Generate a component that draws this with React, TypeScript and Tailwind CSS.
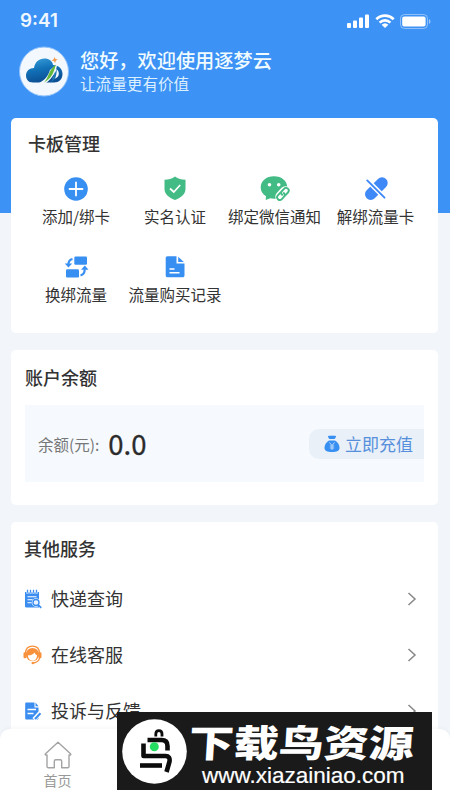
import React from "react";

function Signal() {
  return (
    <svg width="23" height="14" viewBox="0 0 23 14" fill="#fff">
      <rect x="0" y="9" width="4" height="5" rx="1" />
      <rect x="6" y="6.5" width="4" height="7.5" rx="1" />
      <rect x="12" y="3.5" width="4" height="10.5" rx="1" />
      <rect x="18" y="0.5" width="4" height="13.5" rx="1" />
    </svg>
  );
}

function Wifi() {
  return (
    <svg width="20" height="14" viewBox="0 0 20 14" fill="none" stroke="#fff" strokeWidth="2.7">
      <path d="M1.3 5.2a12.6 12.6 0 0 1 17.4 0" />
      <path d="M4.6 8.6a7.8 7.8 0 0 1 10.8 0" />
      <path d="M10 14 6.6 10.8a5 5 0 0 1 6.8 0Z" fill="#fff" stroke="none" />
    </svg>
  );
}

function Battery() {
  return (
    <svg width="31" height="15" viewBox="0 0 31 15">
      <rect x="0.5" y="0.5" width="27" height="14" rx="4" fill="none" stroke="#fff" strokeOpacity=".42" />
      <rect x="2.2" y="2.4" width="23.4" height="10" rx="2" fill="#fff" />
      <path d="M29 5v5c2-1 2-4 0-5Z" fill="#fff" fillOpacity=".5" />
    </svg>
  );
}

function Logo() {
  return (
    <svg width="50" height="51" viewBox="0 0 50 51">
      <defs>
        <linearGradient id="cloud" x1="0" y1="0" x2="0.3" y2="1">
          <stop offset="0" stopColor="#3aa0dc" />
          <stop offset=".5" stopColor="#1272b8" />
          <stop offset="1" stopColor="#0b4f94" />
        </linearGradient>
      </defs>
      <circle cx="25" cy="25.5" r="24.5" fill="#f3f8fe" stroke="#8bbffa" />
      <path
        d="M14 36.5C9 36.5 7 33 7 29.500C7 25 10.500 22 15 22C16 16 20 12.500 25.500 12.500C30 12.500 33.500 15 34 19C39 18.800 43.500 22.500 43.500 28C43.500 33 40 36.500 35 36.500Z"
        fill="url(#cloud)"
      />
      <path d="M35 22.500c4.500 1 5.500 4 4.500 7-1 2.500-3.500 3.500-6 3 2.500-2.500 3-5.500 1.500-10Z" fill="#f3f8fe" />
      <path d="M20 37c6-3 9-7 11-13l7-6c0 6-4 14-11 19Z" fill="#f3f8fe" />
      <path d="M25 36.500c5-5 4-12 12-18-2 6-3 13-12 18Z" fill="#63b83c" />
      <path d="M31 36.500c4-3 3-8 7-13-1 5 0 10-7 13Z" fill="#1874b5" />
      <path d="m35.500 11 1 2.100 2.300.5-2 1.200-.6 2.300-1.300-2-2.300-.4 2-1.400Z" fill="#f39a4b" />
    </svg>
  );
}

function AddIcon() {
  return (
    <svg width="26" height="26" viewBox="0 0 26 26">
      <circle cx="13" cy="13" r="11.800" fill="#388ff2" />
      <path d="M13 6.500v13M6.500 13h13" stroke="#fff" strokeWidth="1.800" strokeLinecap="round" />
    </svg>
  );
}

function ShieldIcon() {
  return (
    <svg width="26" height="26" viewBox="0 0 26 26">
      <path d="M13 0.500c3 2.200 6.500 3.300 10.500 3.300v9c0 5-3.500 8.500-10.500 11.200C6 21.300 2.500 17.800 2.500 12.800v-9C6.500 3.800 10 2.700 13 .500Z" fill="#43bb84" />
      <path d="m8 12.500 3.800 3.500 6.400-7" fill="none" stroke="#fff" strokeWidth="1.700" />
    </svg>
  );
}

function WechatIcon() {
  return (
    <svg width="30" height="26" viewBox="0 0 30 26">
      <path d="M14 .300c7.700 0 13.300 4.700 13.300 11.200 0 6.800-5.600 11.300-13.300 11.300-1.500 0-2.500-.2-3.700-.500L5.700 24l.3-3.700C2.700 18.200.700 15.200.700 11.500.700 5 6.300.300 14 .300Z" fill="#43bb84" />
      <circle cx="9.500" cy="8.800" r="1.800" fill="#fff" />
      <circle cx="18.700" cy="8.800" r="1.800" fill="#fff" />
      <g transform="rotate(-47 23 18)">
        <rect x="14.200" y="12.700" width="17.600" height="10.600" rx="5.300" fill="#fff" />
        <g fill="none" stroke="#43bb84" strokeWidth="1.900" strokeLinecap="round">
          <path d="M22.500 15.200h-4a2.700 2.700 0 0 0 0 5.400h3a2.700 2.700 0 0 0 2.700-2.700" />
          <path d="M23.500 20.600h4a2.700 2.700 0 0 0 0-5.400h-3a2.700 2.700 0 0 0-2.700 2.700" />
        </g>
      </g>
    </svg>
  );
}

function UnlinkIcon() {
  return (
    <svg width="26" height="26" viewBox="0 0 26 26">
      <path d="M19 7 7.700 18.300" stroke="#3f88f7" strokeWidth="11.400" strokeLinecap="round" />
      <path d="m3 3 20 20" stroke="#fff" strokeWidth="4.800" />
      <path d="m4.200 4.400 17.300 17.300" stroke="#3f88f7" strokeWidth="1.900" strokeLinecap="round" />
    </svg>
  );
}

function SwapIcon() {
  return (
    <svg width="26" height="26" viewBox="0 0 26 26" fill="#388ff2">
      <rect x="11.300" y="2.500" width="12.700" height="8.300" rx="1.300" />
      <rect x="3" y="15.200" width="13" height="8.300" rx="1.300" />
      <g fill="none" stroke="#388ff2" strokeWidth="2.200">
        <path d="M9.500 5C6.500 5.700 5.400 7.500 5.400 10.500" />
        <path d="M17.500 21.300c3-.5 4.200-2.500 4.200-6" />
      </g>
      <path d="M1.800 9.500h7.400l-3.800 4Z" />
      <path d="M18 15.800h7.500l-3.700-4.300Z" />
    </svg>
  );
}

function DocIcon() {
  return (
    <svg width="26" height="26" viewBox="0 0 26 26">
      <path d="M5.500 2.300h9v7.200h8v12c0 1-.8 1.800-1.800 1.800H5.500c-1 0-1.800-.8-1.800-1.800V4.100c0-1 .8-1.800 1.800-1.800Z" fill="#388ff2" />
      <path d="M16.200 2.800 21.800 8h-5.600Z" fill="#388ff2" />
      <path d="M7.500 15h5M7.500 18.800h10" stroke="#fff" strokeWidth="1.500" />
    </svg>
  );
}

function MoneyBag() {
  return (
    <svg width="16" height="18" viewBox="0 0 16 18">
      <path d="M4 1.200C5.500.200 6.500 1.300 8 .500c1.500.8 3-.3 4 .700 0 1.200-.8 2-1.500 2.800h-5C4.800 3.200 4 2.400 4 1.200Z" fill="#388ff2" />
      <path d="M5 5.500h6c3 2 4.500 4.500 4.500 7.300 0 3-2.500 4.300-7.500 4.300S.500 15.800.500 12.800C.500 10 2 7.500 5 5.500Z" fill="#388ff2" />
      <path d="m5.500 7.500 2.500 3 2.500-3M8 10.500V15M5.800 11h4.400M5.800 13h4.400" fill="none" stroke="#bcd8fa" strokeWidth="1" />
    </svg>
  );
}

function QueryIcon() {
  return (
    <svg width="18" height="20" viewBox="0 0 18 20">
      <path d="M1 3h14v15.500H2.200c-.7 0-1.200-.5-1.200-1.200Z" fill="#3b8df0" />
      <path d="M3.500 1v3.500M6.500 1v3.500M9.500 1v3.500M12.500 1v3.500" stroke="#fff" strokeWidth="2.200" />
      <path d="M3.500 .8v3M6.500 .8v3M9.500 .8v3M12.500 .8v3" stroke="#3b8df0" strokeWidth="1.300" />
      <path d="M3.500 7.800h9M3.500 10.800h5M3.500 13.800h4" stroke="#fff" strokeWidth="1.100" />
      <circle cx="12" cy="13.500" r="4.300" fill="#fff" />
      <circle cx="12" cy="13.500" r="3" fill="#eaf3ff" stroke="#3b8df0" strokeWidth="1.400" />
      <path d="m14.200 15.800 3 3" stroke="#3b8df0" strokeWidth="1.700" />
    </svg>
  );
}

function ServiceIcon() {
  return (
    <svg className="-ml-px" width="19" height="20" viewBox="0 0 19 20">
      <path d="M2.500 8C2.800 3.800 5.500 1.200 9.500 1.200S16.200 3.800 16.500 8" fill="none" stroke="#f7913b" strokeWidth="1.300" />
      <circle cx="9.500" cy="9.500" r="6.600" fill="#f7913b" />
      <path d="M5 10.300c3 .2 5-.8 6.500-2.800.7 1.500 1.400 2.300 2.500 2.700 0 3.400-1.800 5.500-4.500 5.500S5 13.500 5 10.300Z" fill="#fff" />
      <rect x=".5" y="7.200" width="3" height="6" rx="1.300" fill="#f7913b" />
      <rect x="15.500" y="7.200" width="3" height="6" rx="1.300" fill="#f7913b" />
      <path d="M16.700 12.500c-.5 3.300-3 5-6 5.500" fill="none" stroke="#f7913b" strokeWidth="1.300" />
      <circle cx="9.800" cy="18" r="1.300" fill="#f7913b" />
    </svg>
  );
}

function FeedbackIcon() {
  return (
    <svg width="18" height="20" viewBox="0 0 18 20">
      <path d="M2.500 1.500h8v5h4v10.700c0 .8-.5 1.300-1.300 1.300H2.500c-.8 0-1.300-.5-1.300-1.300V2.800c0-.8.500-1.300 1.300-1.300Z" fill="#3b8df0" />
      <path d="m11.500 1.500 3 3.800h-3Z" fill="#3b8df0" />
      <path d="M3.500 8.500h8.500M3.500 12.500h6" stroke="#fff" strokeWidth="1.500" />
      <path d="m10 18.500 6-6.500" stroke="#fff" strokeWidth="4.200" />
      <path d="m11 18 5.500-5.800" stroke="#3b8df0" strokeWidth="2" />
    </svg>
  );
}

function HomeIcon() {
  return (
    <svg width="28" height="28" viewBox="0 0 28 28" fill="none" stroke="#a3a3a3" strokeWidth="1.400" strokeLinejoin="round">
      <path d="M14 1.200 1.500 12.800c-.5.500-.3 1.200.3 1.200H3v11.500c0 .8.500 1.300 1.300 1.300h6v-6.500c0-1 .6-1.600 1.500-1.600h4.400c.9 0 1.500.6 1.500 1.600v6.500h6c.8 0 1.300-.5 1.300-1.300V14h1.200c.6 0 .8-.7.3-1.200Z" />
    </svg>
  );
}

function BirdLogo() {
  return (
    <svg className="shrink-0" width="66" height="66" viewBox="0 0 66 66">
      <circle cx="33.500" cy="33.500" r="32.300" fill="#fff" />
      <g fill="none" stroke="#0c0c0c" strokeWidth="4.600" strokeLinejoin="round">
        <path d="M34.800 18.500v-2.500c0-4.500 6.200-4.500 6.200 0v2.500" strokeWidth="2.800" />
        <path d="M26.500 22h14c4 0 6 2 6 6v4.500" />
        <path d="M22.500 25.500V38h22c3.500 0 4.500 2 4 5.500L45.500 54" />
        <path d="M19 47.500h22" />
      </g>
      <circle cx="33.300" cy="28.700" r="4.500" fill="#24dc61" />
    </svg>
  );
}

const tiles = [
  { label: "添加/绑卡", icon: <AddIcon /> },
  { label: "实名认证", icon: <ShieldIcon /> },
  { label: "绑定微信通知", icon: <WechatIcon /> },
  { label: "解绑流量卡", icon: <UnlinkIcon /> },
  { label: "换绑流量", icon: <SwapIcon /> },
  { label: "流量购买记录", icon: <DocIcon /> },
];

const services = [
  { label: "快递查询", icon: <QueryIcon /> },
  { label: "在线客服", icon: <ServiceIcon /> },
  { label: "投诉与反馈", icon: <FeedbackIcon /> },
];

export default function App() {
  return (
    <div className="relative h-[800px] w-[450px] overflow-hidden bg-[#f2f6fa] font-['Noto_Sans_CJK_SC',sans-serif] text-[#333]">
      <header className="h-[213px] bg-[#3c92f5]">
        <div className="flex h-[42px] items-center justify-between pl-5 pr-[19px]">
          <span className="font-['Inter',sans-serif] text-[18.800px] font-semibold leading-none text-[#eef7ff]">9:41</span>
          <div className="flex items-center gap-[5px]">
            <Signal />
            <Wifi />
            <Battery />
          </div>
        </div>
        <div className="flex items-start gap-[11px] pl-[19px] pt-1">
          <Logo />
          <div>
            <h1 className="text-[19.200px] font-medium leading-7 text-[#f0fbff]">您好，欢迎使用逐梦云</h1>
            <p className="-mt-px text-[15.600px] leading-5 text-[#dcf0ff]">让流量更有价值</p>
          </div>
        </div>
      </header>

      <main className="-mt-[95px] ml-[11px] w-[427px]">
        <section className="h-[215px] rounded-[5px] bg-white pt-[11px]">
          <h2 className="pl-[17px] text-[18px] font-medium leading-7">卡板管理</h2>
          <div className="ml-[15px] mt-[18px] grid w-[400px] grid-cols-[100px_98px_101px_101px] gap-y-[12px]">
            {tiles.map((tile) => (
              <div key={tile.label} className="flex h-[66px] flex-col items-center">
                <div className="flex h-[27px] items-center">{tile.icon}</div>
                <span className="mt-[2px] whitespace-nowrap text-[15.500px] leading-6">{tile.label}</span>
              </div>
            ))}
          </div>
        </section>

        <section className="mt-[17px] h-[155px] rounded-[5px] bg-white px-[14px] pt-[13px]">
          <h2 className="text-[18px] font-medium leading-7">账户余额</h2>
          <div className="mt-[14px] flex h-[77px] w-[399px] items-center justify-between bg-[#f6fafe]">
            <div className="flex items-center pl-[13px]">
              <span className="pt-[3px] text-[15.500px] text-[#777]">余额(元):</span>
              <span className="-mt-[2px] ml-[9px] text-[27.500px] leading-8 text-[#2b2b2b] [-webkit-text-stroke:0.3px_#2b2b2b]">0.0</span>
            </div>
            <button className="flex h-[30px] w-[115px] items-center gap-[5px] rounded-l-[10px] bg-[#e9f0f8] pl-[15px] text-[17px] text-[#568fdb]">
              <MoneyBag />
              <span className="whitespace-nowrap leading-6">立即充值</span>
            </button>
          </div>
        </section>

        <section className="mt-[17px] h-[280px] rounded-[5px] bg-white px-[13px] pt-[12px]">
          <h2 className="text-[18px] font-medium leading-7">其他服务</h2>
          <ul className="mt-[9px]">
            {services.map((service) => (
              <li key={service.label} className="flex h-[56px] items-center">
                <span className="flex w-[27px] items-center">{service.icon}</span>
                <span className="-mt-[2px] text-[18px] leading-7">{service.label}</span>
                <svg className="ml-auto mr-[8px]" width="10" height="14" viewBox="0 0 10 14" fill="none" stroke="#888" strokeWidth="1.500">
                  <path d="m1.500 1 6.500 6-6.500 6" />
                </svg>
              </li>
            ))}
          </ul>
        </section>
      </main>

      <nav className="absolute bottom-0 left-0 h-[71px] w-full rounded-t-[10px] bg-white shadow-[0_-1px_4px_rgba(0,0,0,0.04)]">
        <div className="flex w-[115px] flex-col items-center pt-[12px]">
          <HomeIcon />
          <span className="mt-px text-[14px] leading-5 text-[#999]">首页</span>
        </div>
      </nav>

      <aside className="absolute left-[117px] top-[712px] flex h-[78px] w-[315px] items-center bg-[#1a1a1a] pl-[4px]">
        <BirdLogo />
        <div className="flex flex-col pt-[4px] text-white">
          <span className="ml-[2px] -skew-x-3 scale-y-[0.83] whitespace-nowrap text-[45px] font-black leading-[48px]">下载鸟资源</span>
          <span className="-mt-[2px] ml-[15px] whitespace-nowrap font-['Liberation_Sans',sans-serif] text-[22.500px] leading-[26px] [-webkit-text-stroke:0.2px_white]">www.xiazainiao.com</span>
        </div>
      </aside>
    </div>
  );
}
